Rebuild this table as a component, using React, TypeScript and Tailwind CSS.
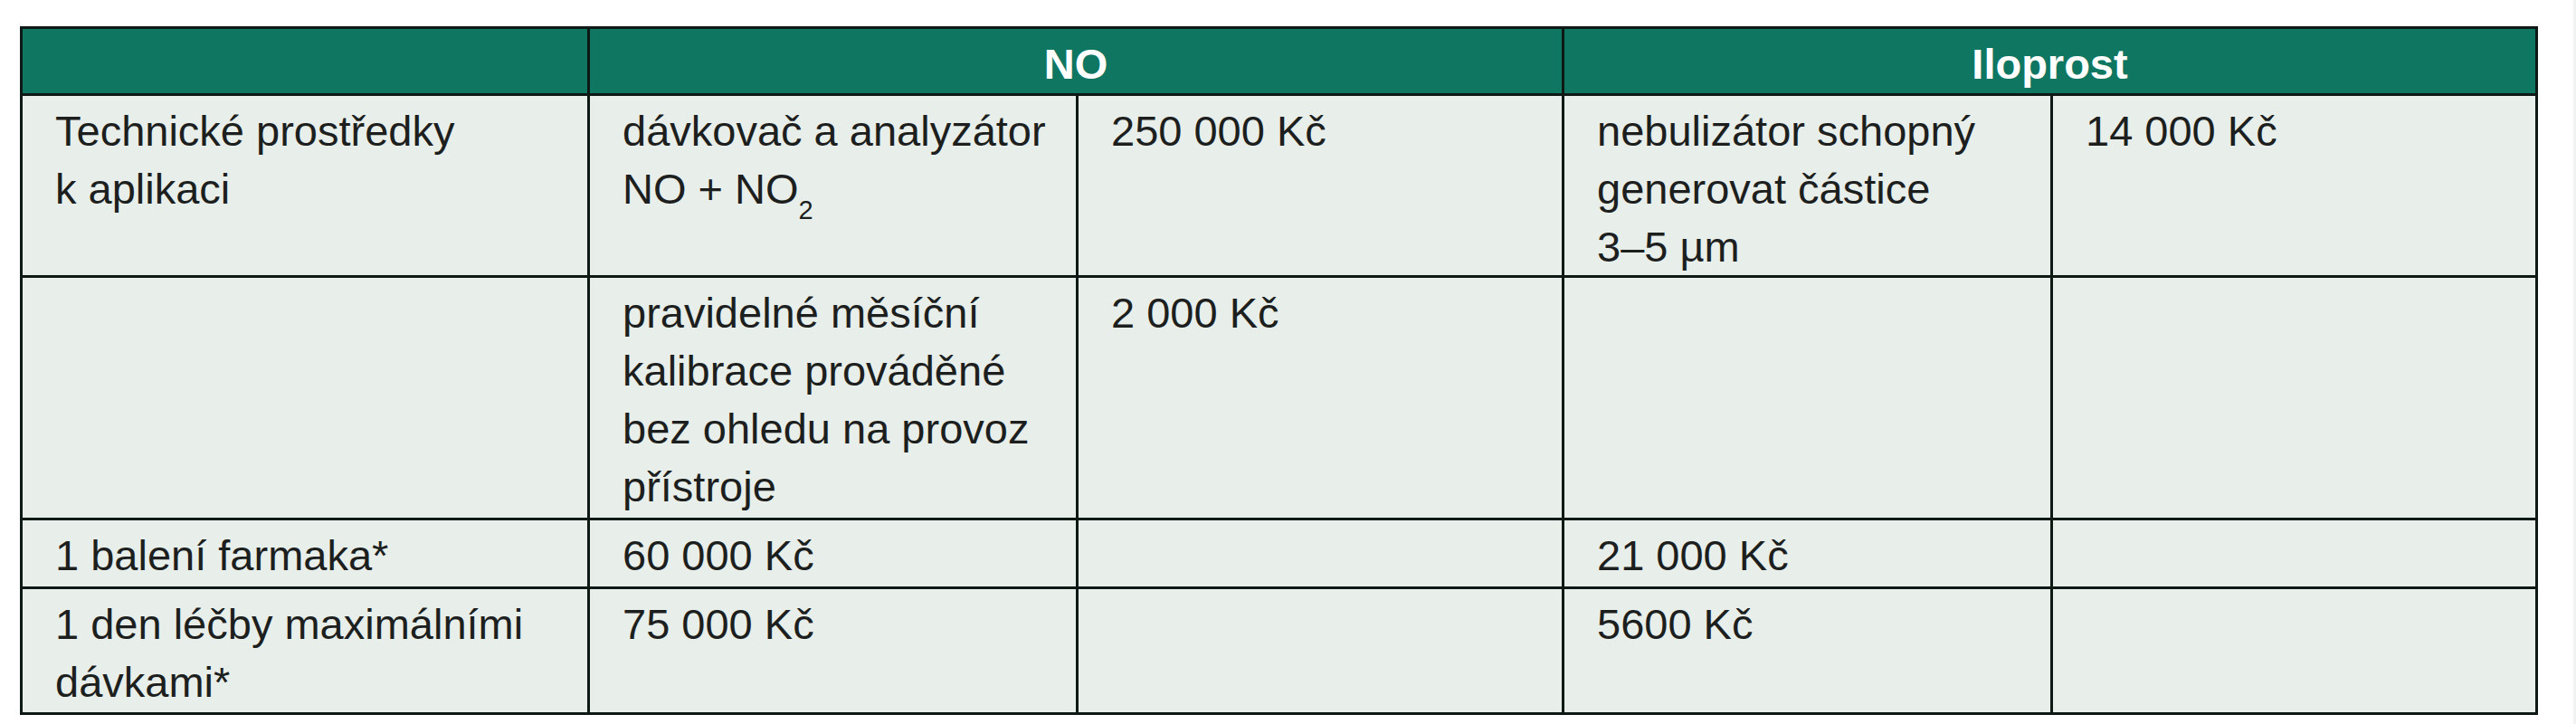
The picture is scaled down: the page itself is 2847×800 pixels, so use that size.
import React from 'react';

const cell = 'border-r-[3px] border-b-[3px] border-[#0e1916]';
const body = `${cell} bg-[#e8eeea] pl-[36px] pt-[7px] text-[#1d1f1e]`;
const head = `${cell} bg-[#0f7662] pt-[7px] text-center font-bold text-white`;

export default function App() {
  return (
    <div className="min-h-[800px] w-[2847px] bg-white pt-[29px] pl-[22px] border-r-[3px] border-[#f1f2f2]">
      <div
        className="grid w-fit grid-cols-[627px_540px_537px_540px_536px] grid-rows-[74px_201px_268px_76px_139px] border-l-[3px] border-t-[3px] border-[#0e1916] text-[47px] leading-[64px]"
        style={{ fontFamily: '"Liberation Sans", Arial, sans-serif' }}
      >
        {/* Header */}
        <div className={head}></div>
        <div className={`${head} col-span-2`}>NO</div>
        <div className={`${head} col-span-2`}>Iloprost</div>

        {/* Technické prostředky */}
        <div className={body}>
          Technické prostředky
          <br />
          k aplikaci
        </div>
        <div className={body}>
          dávkovač a analyzátor
          <br />
          NO + NO
          <sub className="text-[29px] -bottom-[17px]">2</sub>
        </div>
        <div className={body}>250 000 Kč</div>
        <div className={body}>
          nebulizátor schopný
          <br />
          generovat částice
          <br />
          3–5 µm
        </div>
        <div className={body}>14 000 Kč</div>

        {/* Kalibrace */}
        <div className={body}></div>
        <div className={body}>
          pravidelné měsíční
          <br />
          kalibrace prováděné
          <br />
          bez ohledu na provoz
          <br />
          přístroje
        </div>
        <div className={body}>2 000 Kč</div>
        <div className={body}></div>
        <div className={body}></div>

        {/* Balení */}
        <div className={body}>1 balení farmaka*</div>
        <div className={body}>60 000 Kč</div>
        <div className={body}></div>
        <div className={body}>21 000 Kč</div>
        <div className={body}></div>

        {/* Den léčby */}
        <div className={body}>
          1 den léčby maximálními
          <br />
          dávkami*
        </div>
        <div className={body}>75 000 Kč</div>
        <div className={body}></div>
        <div className={body}>5600 Kč</div>
        <div className={body}></div>
      </div>
    </div>
  );
}
